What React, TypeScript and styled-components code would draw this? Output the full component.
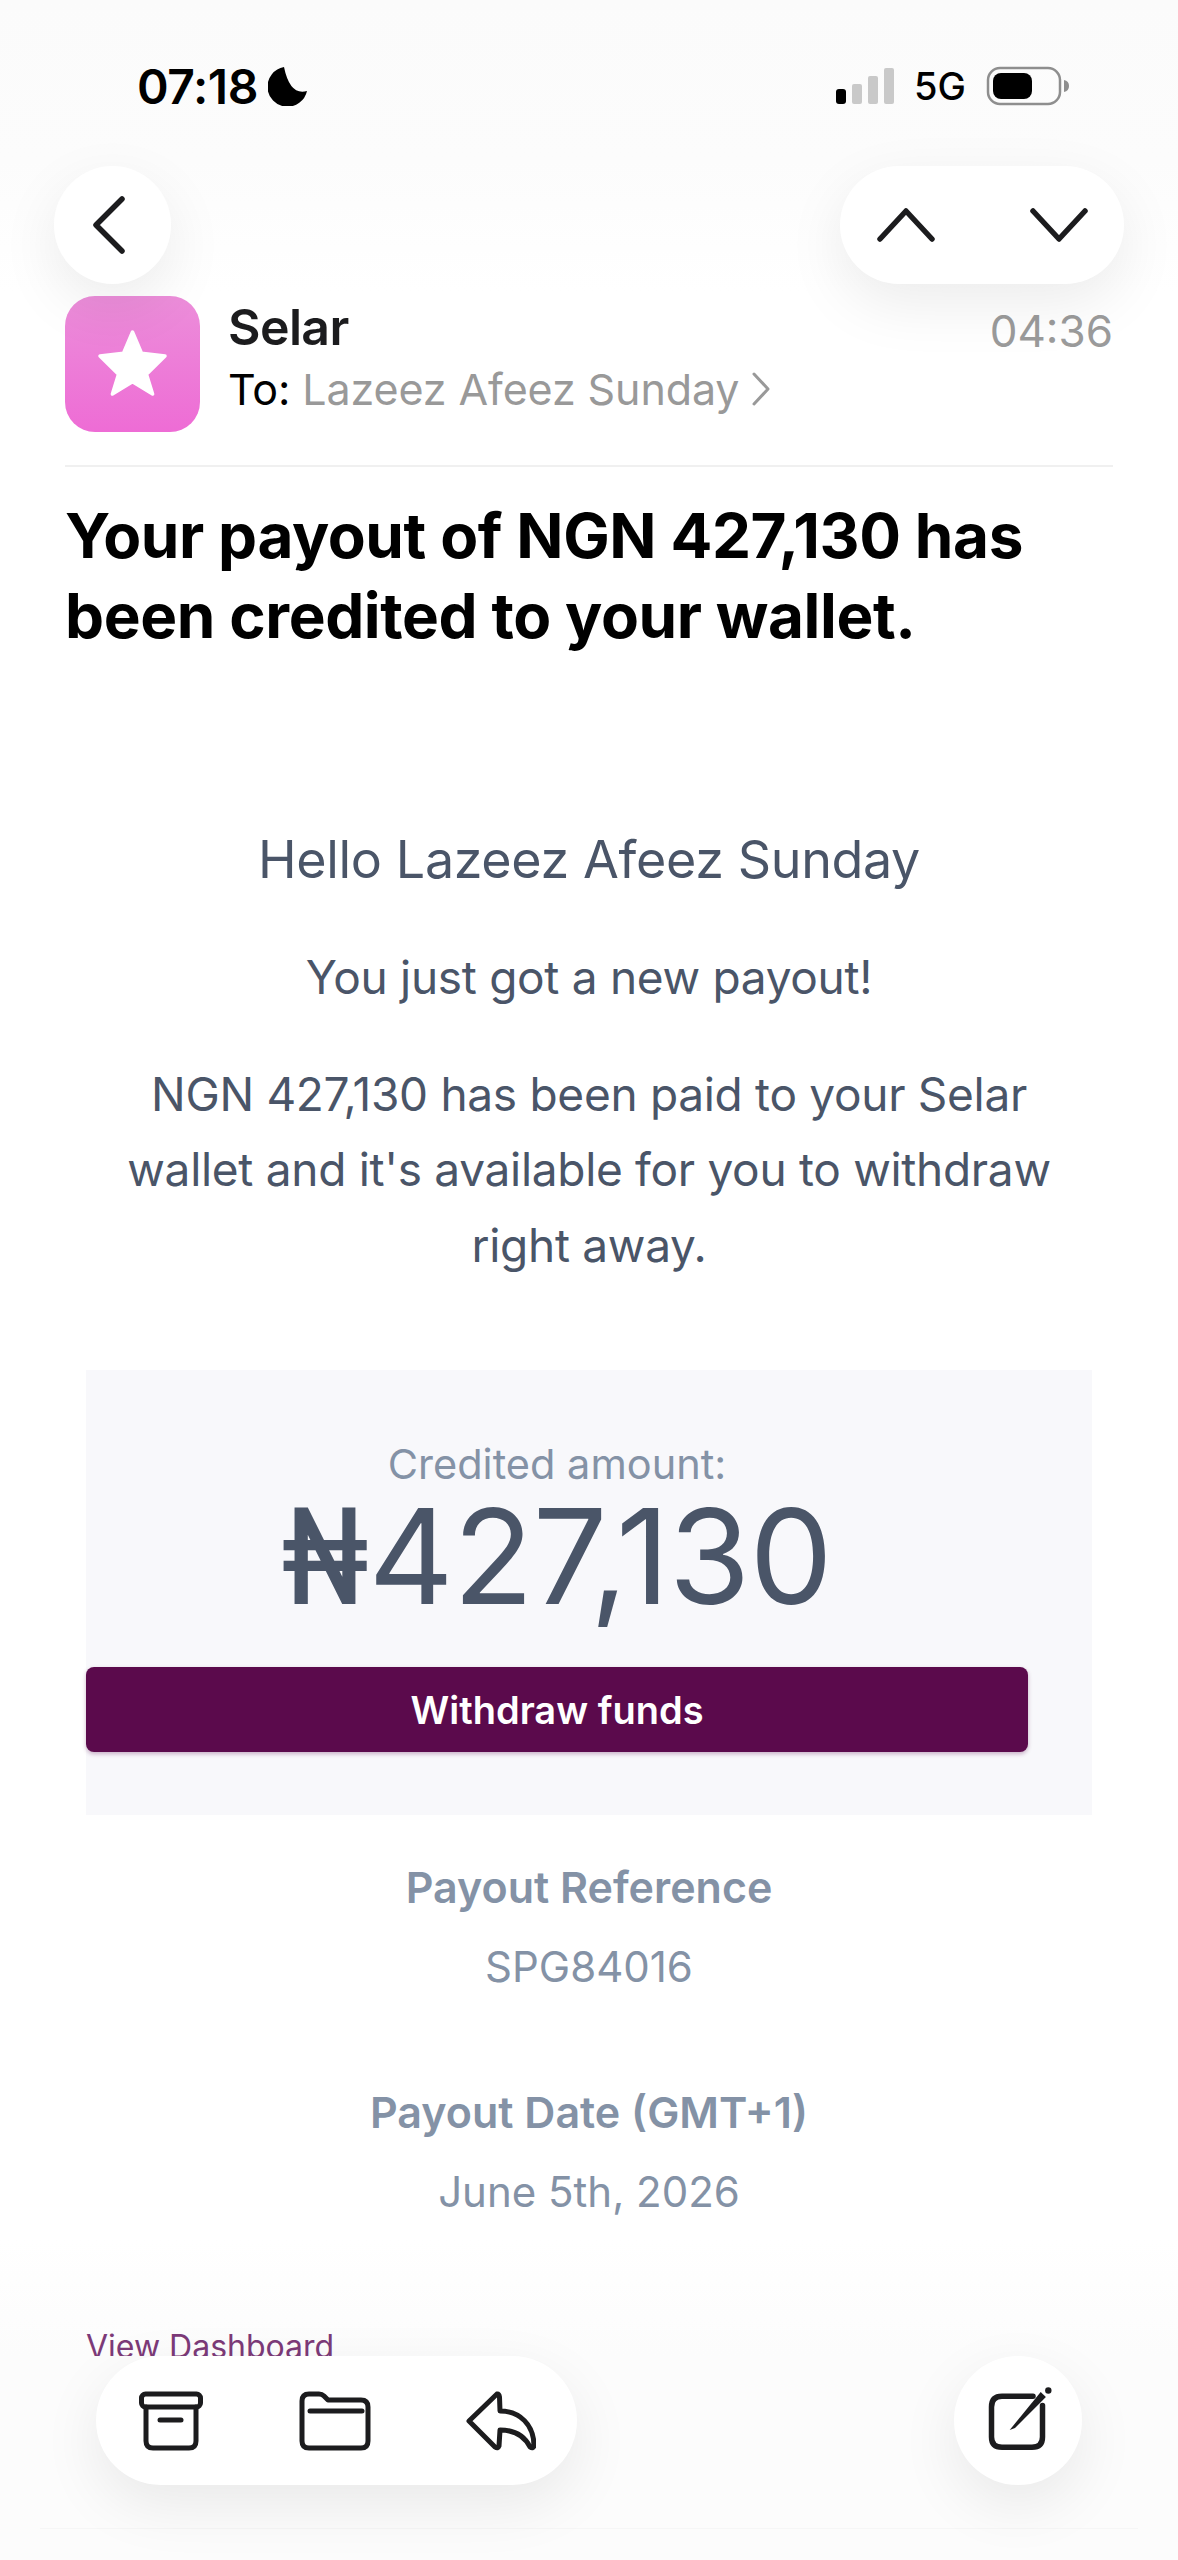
import React from 'react';
import styled, { createGlobalStyle } from 'styled-components';

const sans = `Inter, "Noto Sans", "Liberation Sans", sans-serif`;

const GlobalStyle = createGlobalStyle`
  html, body {
    margin: 0;
    padding: 0;
    background: #ffffff;
    font-family: ${sans};
  }
`;

const Screen = styled.div`
  position: relative;
  width: 1178px;
  height: 2560px;
  overflow: hidden;
  background: linear-gradient(#ffffff 2240px, #fcfcfc 2356px);
`;

const TopFade = styled.div`
  position: absolute;
  top: 0;
  left: 0;
  right: 0;
  height: 292px;
  background: linear-gradient(#fbfbfb 0%, #fcfcfc 55%, rgba(255, 255, 255, 0) 100%);
`;

const StatusBar = styled.div`
  position: absolute;
  top: 62px;
  left: 137px;
  right: 108px;
  height: 48px;
  display: flex;
  align-items: center;
  justify-content: space-between;
`;

const StatusGroup = styled.div`
  display: flex;
  align-items: center;
`;

const Clock = styled.span`
  font-size: 48px;
  font-weight: 600;
  letter-spacing: -0.4px;
  color: #000000;
`;

const MoonIcon = styled.svg`
  margin-left: 10px;
`;

const NetworkLabel = styled.span`
  font-size: 38px;
  font-weight: 500;
  color: #000000;
  margin: 0 20px 0 19px;
`;

const RoundButton = styled.div<{ $width: number }>`
  position: absolute;
  width: ${(p) => p.$width}px;
  height: 118px;
  border-radius: 59px;
  background: #ffffff;
  box-shadow: 0 20px 60px rgba(0, 0, 0, 0.08);
  display: flex;
  align-items: center;
  justify-content: center;
`;

const BackButton = styled(RoundButton)`
  top: 166px;
  left: 54px;
`;

const BackIcon = styled.svg`
  margin-right: 8px;
`;

const NavPill = styled(RoundButton)`
  top: 166px;
  left: 840px;
  gap: 95px;
`;

const BottomBar = styled.div`
  position: absolute;
  left: 0;
  right: 0;
  top: 2356px;
  bottom: 0;
  background: #fcfcfc;
`;

const BottomPill = styled(RoundButton)`
  top: 0;
  left: 96px;
  height: 129px;
  border-radius: 65px;
  gap: 94px;
`;

const ComposeButton = styled(RoundButton)`
  top: 0;
  left: 954px;
  height: 129px;
  border-radius: 65px;
`;

const BottomRule = styled.div`
  position: absolute;
  left: 40px;
  right: 40px;
  top: 172px;
  height: 1px;
  background: #f6f6f6;
`;

const Content = styled.main`
  padding: 296px 65px 0 65px;
`;

const MailHeader = styled.header`
  display: flex;
  gap: 28px;
  padding-bottom: 33px;
  border-bottom: 2px solid #f0f0f0;
`;

const Avatar = styled.div`
  width: 135px;
  height: 136px;
  flex: none;
  border-radius: 30px;
  background: linear-gradient(#ec8eda, #ee6cd5);
  display: flex;
  align-items: center;
  justify-content: center;
`;

const StarIcon = styled.svg`
  margin-bottom: 3px;
`;

const Meta = styled.div`
  flex: 1;
  display: flex;
  flex-direction: column;
`;

const MetaTop = styled.div`
  display: flex;
  justify-content: space-between;
  align-items: center;
`;

const Sender = styled.span`
  font-size: 50px;
  line-height: 60px;
  font-weight: 600;
  letter-spacing: -0.6px;
  color: #1c1c1e;
`;

const SentTime = styled.span`
  margin-top: 8px;
  font-size: 44px;
  color: #9b9b9b;
`;

const Recipient = styled.div`
  display: flex;
  align-items: center;
  gap: 12px;
  font-size: 43px;
  line-height: 60px;
  letter-spacing: -0.1px;
  color: #000000;
  margin-top: 1px;
`;

const RecipientName = styled.span`
  color: #999999;
`;

const Subject = styled.h1`
  margin: 29px 0 0;
  font-size: 62px;
  line-height: 80px;
  font-weight: 700;
  letter-spacing: -0.4px;
  color: #000000;
`;

const Body = styled.section`
  margin: 0 -65px 0 -65px;
  padding-top: 169px;
  text-align: center;
  color: #4a5568;
`;

const Greeting = styled.h2`
  margin: 0;
  font-size: 52px;
  line-height: 70px;
  font-weight: 400;
  letter-spacing: -0.36px;
`;

const Paragraph = styled.p`
  margin: 0 auto;
  width: 960px;
  font-size: 46px;
  line-height: 75.5px;
  font-weight: 400;
  letter-spacing: -0.3px;
`;

const Lead = styled(Paragraph)`
  margin-top: 45px;
`;

const Detail = styled(Paragraph)`
  margin-top: 41px;
`;

const AmountBox = styled.div`
  margin: 87px 86px 0 86px;
  height: 445px;
  background: #f8f8fb;
  box-sizing: border-box;
  padding: 70px 64px 0 0;
  text-align: center;
`;

const AmountLabel = styled.div`
  font-size: 41.5px;
  line-height: 48px;
  color: #8492a6;
`;

const AmountValue = styled.div`
  margin-top: 3px;
  font-size: 132px;
  line-height: 130px;
  color: #4a5568;
  letter-spacing: -0.8px;
`;

const NairaSign = styled.span`
  display: inline-block;
  margin-left: -22px;
  transform: scaleX(0.8);
  transform-origin: right center;
  font-family: Roboto, "Noto Sans", sans-serif;
  font-size: 135px;
  font-weight: 500;
  letter-spacing: 0;
`;

const WithdrawButton = styled.button`
  display: block;
  width: 942px;
  height: 85px;
  margin-top: 44px;
  border: none;
  border-radius: 8px;
  background: #5b0a4c;
  box-shadow: 0 2px 4px rgba(91, 10, 76, 0.3);
  color: #ffffff;
  font-family: ${sans};
  font-size: 38px;
  font-weight: 600;
`;

const FactLabel = styled.div`
  font-size: 43px;
  line-height: 60px;
  font-weight: 600;
  color: #8492a6;
`;

const FactValue = styled.div`
  margin-top: 20px;
  font-size: 42px;
  line-height: 60px;
  color: #8492a6;
`;

const Fact = styled.div<{ $top: number }>`
  margin-top: ${(p) => p.$top}px;
`;

const DashboardLink = styled.a`
  display: block;
  margin: 105px 0 0 86px;
  text-align: left;
  font-size: 32px;
  line-height: 40px;
  color: #7c3a78;
`;

const icon = { fill: 'none', stroke: '#1c1c1e', strokeLinecap: 'round', strokeLinejoin: 'round' } as const;

export default function App() {
  return (
    <Screen>
      <GlobalStyle />
      <Content>
        <MailHeader>
          <Avatar>
            <StarIcon width="71" height="68" viewBox="-2 -2 71 68">
              <path
                d="M33.5 1 L42.5 22.3 L66 25 L47.5 43.3 L53.6 63 L33.5 50.7 L13.4 63 L19.5 43.3 L1 25 L24.5 22.3 Z"
                fill="#fff"
                stroke="#fff"
                strokeWidth="3.5"
                strokeLinejoin="round"
              />
            </StarIcon>
          </Avatar>
          <Meta>
            <MetaTop>
              <Sender>Selar</Sender>
              <SentTime>04:36</SentTime>
            </MetaTop>
            <Recipient>
              <span>To:</span>
              <RecipientName>Lazeez Afeez Sunday</RecipientName>
              <svg width="20" height="36" viewBox="0 0 20 36" {...icon} stroke="#999" strokeWidth="3">
                <path d="M3 3 L17 18 L3 33" />
              </svg>
            </Recipient>
          </Meta>
        </MailHeader>
        <Subject>
          Your payout of NGN 427,130 has
          <br />
          been credited to your wallet.
        </Subject>
        <Body>
          <Greeting>Hello Lazeez Afeez Sunday</Greeting>
          <Lead>You just got a new payout!</Lead>
          <Detail>NGN 427,130 has been paid to your Selar wallet and it's available for you to withdraw right away.</Detail>
          <AmountBox>
            <AmountLabel>Credited amount:</AmountLabel>
            <AmountValue>
              <NairaSign>₦</NairaSign>427,130
            </AmountValue>
            <WithdrawButton>Withdraw funds</WithdrawButton>
          </AmountBox>
          <Fact $top={42}>
            <FactLabel>Payout Reference</FactLabel>
            <FactValue>SPG84016</FactValue>
          </Fact>
          <Fact $top={85}>
            <FactLabel>Payout Date (GMT+1)</FactLabel>
            <FactValue>June 5th, 2026</FactValue>
          </Fact>
          <DashboardLink>View Dashboard</DashboardLink>
        </Body>
      </Content>

      <TopFade />
      <StatusBar>
        <StatusGroup>
          <Clock>07:18</Clock>
          <MoonIcon width="40" height="40" viewBox="0 0 40 40">
            <path d="M16 1 A20 20 0 1 0 39 25 Q22 30 16 1 Z" fill="#000" />
          </MoonIcon>
        </StatusGroup>
        <StatusGroup>
          <svg width="60" height="38" viewBox="0 0 60 38">
            <rect x="1" y="22" width="10" height="15" rx="3" fill="#000" />
            <rect x="17" y="17" width="10" height="20" rx="2" fill="#c9c9c9" />
            <rect x="33" y="9" width="10" height="28" rx="2" fill="#c9c9c9" />
            <rect x="49" y="1" width="10" height="36" rx="2" fill="#c9c9c9" />
          </svg>
          <NetworkLabel>5G</NetworkLabel>
          <svg width="84" height="40" viewBox="0 0 84 40">
            <rect x="2" y="2" width="72" height="36" rx="12" fill="none" stroke="#8e8e8e" strokeWidth="2.5" />
            <rect x="7" y="7" width="39" height="26" rx="8" fill="#000" />
            <path d="M78 14 Q83 15 83 20 Q83 25 78 26 Z" fill="#8e8e8e" />
          </svg>
        </StatusGroup>
      </StatusBar>
      <BackButton $width={117}>
        <BackIcon width="40" height="60" viewBox="0 0 40 60" {...icon} strokeWidth="5.5">
          <path d="M33 4 L7 30 L33 56" />
        </BackIcon>
      </BackButton>
      <NavPill $width={284}>
        <svg width="58" height="34" viewBox="0 0 58 34" {...icon} strokeWidth="5.5">
          <path d="M3 31 L29 3 L55 31" />
        </svg>
        <svg width="58" height="34" viewBox="0 0 58 34" {...icon} strokeWidth="5.5">
          <path d="M3 3 L29 31 L55 3" />
        </svg>
      </NavPill>

      <BottomBar>
        <BottomRule />
        <BottomPill $width={481}>
          <svg width="66" height="62" viewBox="0 0 66 62" {...icon} strokeWidth="5">
            <rect x="3.5" y="4" width="59" height="13" rx="4" />
            <path d="M8 17 V51 Q8 58 15 58 H51 Q58 58 58 51 V17" />
            <path d="M22 30 H43" />
          </svg>
          <svg width="74" height="62" viewBox="0 0 74 62" {...icon} strokeWidth="5">
            <path d="M4 11 Q4 4 11 4 H21 Q24 4 26 6 L30 10 H63 Q70 10 70 17 V51 Q70 58 63 58 H11 Q4 58 4 51 Z" />
            <path d="M12 21 H64" />
          </svg>
          <svg width="70" height="62" viewBox="0 0 70 62" {...icon} strokeWidth="5">
            <path d="M3 31 L31 4 Q33 3.5 33.5 7 L34 21 C54 21 68 35 68 56 Q67 59 64 57 C58 45 48 40 34 40 L33 56 Q32 59 29 57 Z" />
          </svg>
        </BottomPill>
        <ComposeButton $width={128}>
          <svg width="70" height="70" viewBox="0 0 70 70" {...icon} strokeWidth="5.5">
            <path d="M50 10.3 H19 Q8.5 10.3 8.5 21 V51 Q8.5 61.3 19 61.3 H49 Q59.5 61.3 59.5 51 V19.5" />
            <path d="M26.7 44 L57.7 6.1 L62.9 10.9 L32 42 Z" fill="#1c1c1e" stroke="none" />
            <circle cx="65.3" cy="4.5" r="3.2" fill="#1c1c1e" stroke="none" />
          </svg>
        </ComposeButton>
      </BottomBar>
    </Screen>
  );
}
